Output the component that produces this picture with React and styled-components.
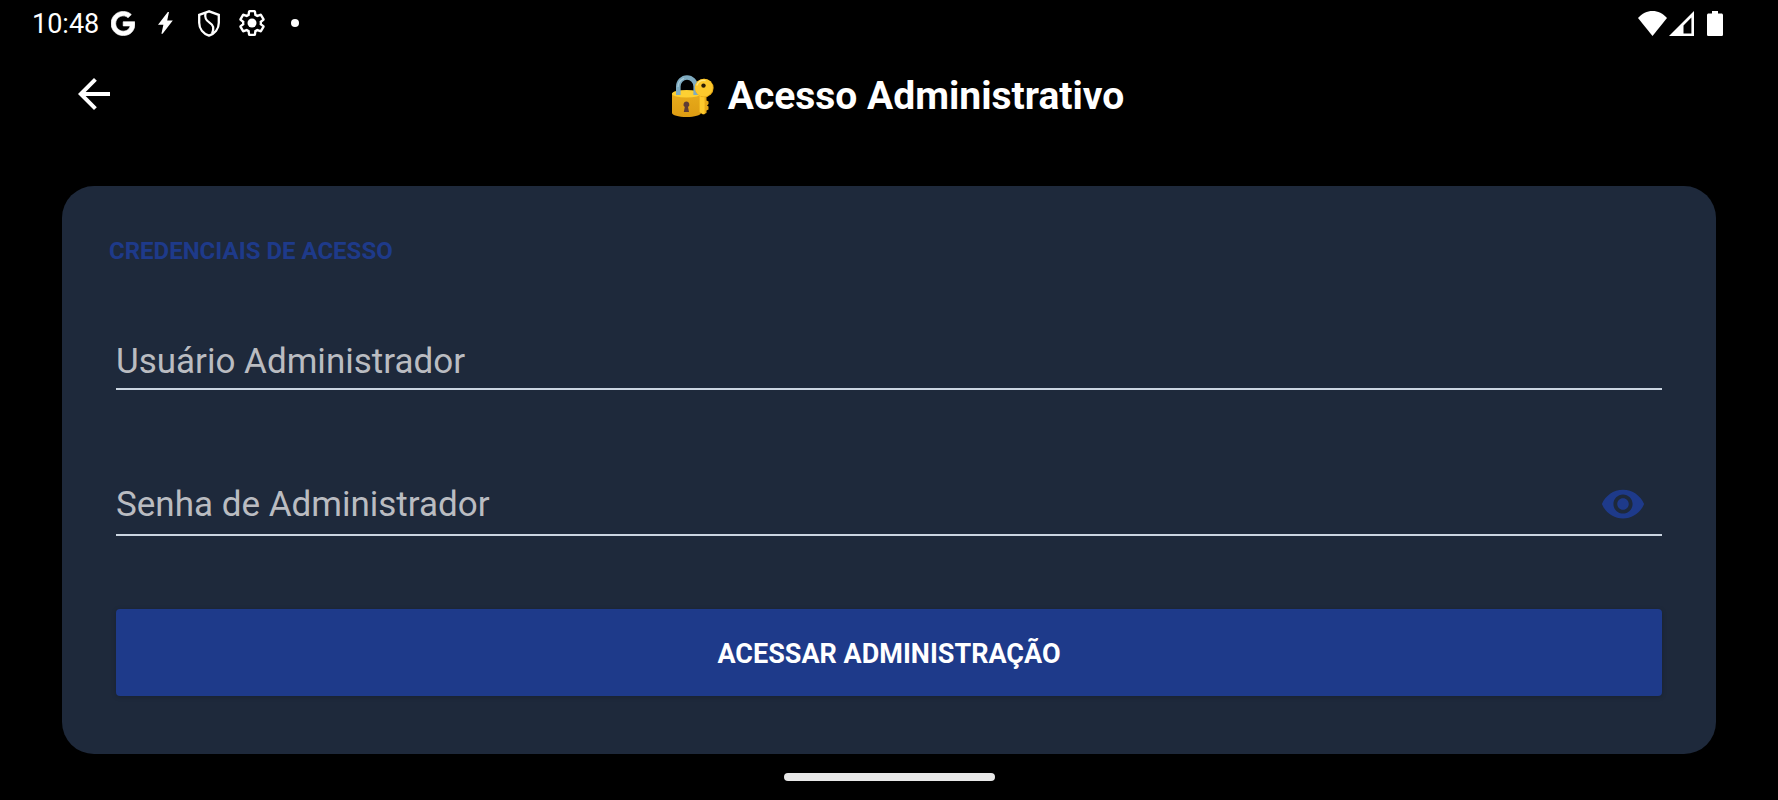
import React, { useState } from 'react';
import styled, { createGlobalStyle } from 'styled-components'

const GlobalStyle = createGlobalStyle`
    * {
        box-sizing: border-box;
    }

    body {
        margin: 0;
        background: #000;
        font-family: Roboto, 'Liberation Sans', sans-serif;
    }
`

const Screen = styled.div`
    display: flex;
    flex-direction: column;
    min-height: 100vh;
    background: #000;
    color: #fff;
`

const StatusBar = styled.div`
    display: flex;
    align-items: center;
    justify-content: space-between;
    height: 46px;
    padding: 0 55px 0 32px;
`

const StatusGroup = styled.div`
    display: flex;
    align-items: center;
    gap: ${({ $gap }) => $gap}px;
`

const Clock = styled.span`
    padding-top: 1px;
    font-size: 27px;
    line-height: 32px;
`

const Slot = styled.span`
    display: flex;
    justify-content: center;
    width: 43px;
`

const StatusIcon = styled.svg`
    display: block;
    flex: none;
`

const Header = styled.header`
    display: flex;
    align-items: center;
    height: 96px;
    padding: 0 108px 0 62px;
`

const BackButton = styled.button`
    display: flex;
    align-items: center;
    justify-content: center;
    width: 64px;
    height: 64px;
    padding: 0;
    border: none;
    background: none;
    color: #fff;
    cursor: pointer;
`

const Title = styled.h1`
    display: flex;
    flex: 1;
    align-items: center;
    justify-content: center;
    gap: 14px;
    margin: 0;
    padding-top: 3px;
    font-size: 39px;
    font-weight: 700;
    line-height: 48px;
`

const Card = styled.form`
    margin: 44px 62px 0;
    padding: 49px 54px 58px;
    border-radius: 32px;
    background: #1e293b;
`

const SectionLabel = styled.h2`
    margin: 0 0 67px -7px;
    color: #1e3a8a;
    font-size: 24px;
    font-weight: 700;
    line-height: 32px;
`

const Field = styled.div`
    display: flex;
    align-items: center;
    height: ${({ $tall }) => ($tall ? 62 : 56)}px;
    margin-bottom: ${({ $tall }) => ($tall ? 73 : 84)}px;
    padding-right: ${({ $tall }) => ($tall ? 16 : 0)}px;
    border-bottom: 2px solid #cbd5e1;
`

const Input = styled.input`
    flex: 1;
    min-width: 0;
    height: 100%;
    padding: 0;
    border: none;
    outline: none;
    background: transparent;
    color: #fff;
    font-family: inherit;
    font-size: 35px;

    &::placeholder {
        color: #babcc1;
        opacity: 1;
    }
`

const EyeButton = styled.button`
    display: flex;
    padding: 0;
    border: none;
    background: none;
    color: #1e3a8a;
    cursor: pointer;
`

const SubmitButton = styled.button`
    display: block;
    width: 100%;
    height: 87px;
    padding: 2px 0 0;
    border: none;
    border-radius: 4px;
    background: #1e3a8a;
    box-shadow: 0 1px 5px rgba(0, 0, 0, 0.2);
    color: #fff;
    font-family: inherit;
    font-size: 27px;
    font-weight: 700;
    cursor: pointer;
`

const HomeBar = styled.div`
    width: 211px;
    height: 8px;
    margin: 19px auto;
    border-radius: 4px;
    background: #e8e8e8;
`

const GoogleIcon = () => (
    <StatusIcon width="24" height="25" viewBox="0 0 488 512" fill="currentColor">
        <path
            stroke="currentColor"
            strokeWidth="14"
            d="M488 261.8C488 403.3 391.1 504 248 504 110.8 504 0 393.2 0 256S110.8 8 248 8c66.8 0 123 24.5 166.3 64.9l-67.5 64.9C258.5 52.6 94.3 116.6 94.3 256c0 86.5 69.1 156.6 153.7 156.6 98.2 0 135-70.4 140.8-106.9H248v-85.3h236.1c2.3 12.7 3.9 24.9 3.9 41.4z"
        />
    </StatusIcon>
)

const BoltIcon = () => (
    <StatusIcon width="15" height="22" viewBox="0 0 15 22" fill="currentColor">
        <path d="M9.8 0 0 12.8h5.4L3.4 21.8h1.2L14.8 8.6H9.2L11 0z" />
    </StatusIcon>
)

const ShieldIcon = () => (
    <StatusIcon width="22" height="27" viewBox="0 0 22 27" fill="none" stroke="currentColor" strokeWidth="2.3">
        <path d="M11 1.3 1.2 4.8v8c0 6 4 10.800 9.800 12.800 5.800-2 9.800-6.800 9.800-12.800v-8z" />
        <path d="M7.500 3c-1 5 .2 7.200 4 9.600 4.300 2.700 4.600 5.600 2.600 11" />
    </StatusIcon>
)

const GearIcon = () => (
    <StatusIcon width="26" height="26" viewBox="1 1 22 22" fill="none">
        <path
            stroke="currentColor"
            strokeWidth="2"
            d="M19.43 12.98c.04-.32.07-.64.07-.98 0-.34-.03-.66-.07-.98l2.11-1.65c.19-.15.24-.42.12-.64l-2-3.46a.5.5 0 0 0-.61-.22l-2.49 1c-.52-.4-1.08-.73-1.69-.98l-.38-2.65A.488.488 0 0 0 14 2h-4c-.25 0-.46.18-.49.42l-.38 2.65c-.61.25-1.17.59-1.69.98l-2.49-1a.566.566 0 0 0-.18-.03c-.17 0-.34.09-.43.25l-2 3.46c-.13.22-.07.49.12.64l2.11 1.65c-.04.32-.07.65-.07.98 0 .33.03.66.07.98l-2.11 1.65c-.19.15-.24.42-.12.64l2 3.46a.5.5 0 0 0 .61.22l2.49-1c.52.4 1.08.73 1.69.98l.38 2.65c.03.24.24.42.49.42h4c.25 0 .46-.18.49-.42l.38-2.65c.61-.25 1.17-.59 1.69-.98l2.49 1c.06.02.12.03.18.03.17 0 .34-.09.43-.25l2-3.46c.12-.22.07-.49-.12-.64l-2.11-1.65z"
        />
        <circle cx="12" cy="12" r="3.8" fill="currentColor" />
    </StatusIcon>
)

const DotIcon = () => (
    <StatusIcon width="8" height="8" viewBox="0 0 8 8" fill="currentColor">
        <circle cx="4" cy="4" r="4" />
    </StatusIcon>
)

const WifiIcon = () => (
    <StatusIcon width="29" height="25" viewBox="0 0 29 25" fill="currentColor">
        <path d="M14.5 25 0 7C4 2.6 9 0 14.5 0S25 2.6 29 7z" />
    </StatusIcon>
)

const SignalIcon = () => (
    <StatusIcon width="25" height="25" viewBox="0 0 25 25" fill="currentColor" fillRule="evenodd">
        <path d="M25 0v25H0zM22.4 6.5 14.5 14.4v8h7.9z" />
    </StatusIcon>
)

const BatteryIcon = () => (
    <StatusIcon width="16" height="25" viewBox="0 0 16 25" fill="currentColor">
        <path d="M5 0h6v2.5h3.4c.9 0 1.6.7 1.6 1.6v19.3c0 .9-.7 1.6-1.6 1.6H1.6C.7 25 0 24.3 0 23.4V4.1c0-.9.7-1.6 1.6-1.6H5z" />
    </StatusIcon>
)

const BackIcon = () => (
    <svg width="48" height="48" viewBox="0 0 24 24" fill="currentColor">
        <path d="M20 11H7.83l5.59-5.59L12 4l-8 8 8 8 1.41-1.41L7.83 13H20v-2z" />
    </svg>
)

const EyeIcon = () => (
    <svg width="46" height="46" viewBox="0 0 24 24" fill="currentColor">
        <path d="M12 4.5C7 4.5 2.73 7.61 1 12c1.73 4.39 6 7.5 11 7.5s9.27-3.11 11-7.5c-1.73-4.39-6-7.5-11-7.5zM12 17c-2.76 0-5-2.24-5-5s2.24-5 5-5 5 2.24 5 5-2.24 5-5 5zm0-8c-1.66 0-3 1.34-3 3s1.34 3 3 3 3-1.34 3-3-1.34-3-3-3z" />
    </svg>
)

const LockKeyIcon = () => (
    <svg width="42" height="42" viewBox="0 0 42 42" fill="none">
        <defs>
            <linearGradient id="lockBody" x1="0" y1="0" x2="0" y2="1">
                <stop offset="0" stopColor="#e8ab1b" />
                <stop offset="1" stopColor="#dd9c12" />
            </linearGradient>
        </defs>
        <path d="M0 18.5h29V38c0 2.300-6.500 4-14.500 4S0 40.300 0 38z" fill="url(#lockBody)" />
        <ellipse cx="14.5" cy="18.8" rx="14.5" ry="3.8" fill="#fdd033" />
        <path d="M6.300 20V11.500a8.700 9 0 0 1 17.400 0V20" stroke="#7fabc0" strokeWidth="4.600" />
        <path d="M6 12a9 9.500 0 0 1 6-8.600" stroke="#a9cbd9" strokeWidth="1.200" />
        <path d="M14.4 26.5a3 3 0 0 1 1.6 5.500l1 5h-5.200l1-5a3 3 0 0 1 1.600-5.500z" fill="#5d3b35" />
        <path d="M28 18v19.500l3 2 3.500-1.500v-2.500l2-1v-3l-1.500-1 1.500-1.500v-2.500l-2-1v-8z" fill="#e8a917" />
        <path d="M27.600 17.500h5v21.800l-1.800-.2-3.200-2.100z" fill="#fdc92c" />
        <circle cx="32.300" cy="13" r="9.300" fill="#e8a917" />
        <circle cx="31.800" cy="12.600" r="8.900" fill="#fdc92c" />
        <path d="M25 10c1.600-3.600 5-5 8-4.400" stroke="#ffe680" strokeWidth="1.400" strokeLinecap="round" />
        <circle cx="31.500" cy="10.600" r="2.200" fill="#2b1c07" />
    </svg>
)

const App = () => {
    const [user, setUser] = useState('');
    const [password, setPassword] = useState('');
    const [showPassword, setShowPassword] = useState(false);

    const handleSubmit = (e) => {
        e.preventDefault();
    }

    return (
        <Screen>
            <GlobalStyle />
            <StatusBar>
                <StatusGroup $gap={2}>
                    <Clock>10:48</Clock>
                    <StatusGroup $gap={0}>
                        <Slot><GoogleIcon /></Slot>
                        <Slot><BoltIcon /></Slot>
                        <Slot><ShieldIcon /></Slot>
                        <Slot><GearIcon /></Slot>
                        <Slot><DotIcon /></Slot>
                    </StatusGroup>
                </StatusGroup>
                <StatusGroup $gap={13}>
                    <StatusGroup $gap={2}>
                        <WifiIcon />
                        <SignalIcon />
                    </StatusGroup>
                    <BatteryIcon />
                </StatusGroup>
            </StatusBar>
            <Header>
                <BackButton type="button" aria-label="Voltar">
                    <BackIcon />
                </BackButton>
                <Title>
                    <LockKeyIcon />
                    Acesso Administrativo
                </Title>
            </Header>
            <Card onSubmit={handleSubmit}>
                <SectionLabel>CREDENCIAIS DE ACESSO</SectionLabel>
                <Field>
                    <Input
                        type="text"
                        aria-label="Usuário Administrador"
                        placeholder="Usuário Administrador"
                        value={user}
                        onChange={(e) => { setUser(e.target.value) }}
                    />
                </Field>
                <Field $tall>
                    <Input
                        type={showPassword ? 'text' : 'password'}
                        aria-label="Senha de Administrador"
                        placeholder="Senha de Administrador"
                        value={password}
                        onChange={(e) => { setPassword(e.target.value) }}
                    />
                    <EyeButton
                        type="button"
                        aria-label="Mostrar senha"
                        onClick={() => { setShowPassword(!showPassword) }}
                    >
                        <EyeIcon />
                    </EyeButton>
                </Field>
                <SubmitButton type="submit">ACESSAR ADMINISTRAÇÃO</SubmitButton>
            </Card>
            <HomeBar />
        </Screen>
    )
}

export default App
